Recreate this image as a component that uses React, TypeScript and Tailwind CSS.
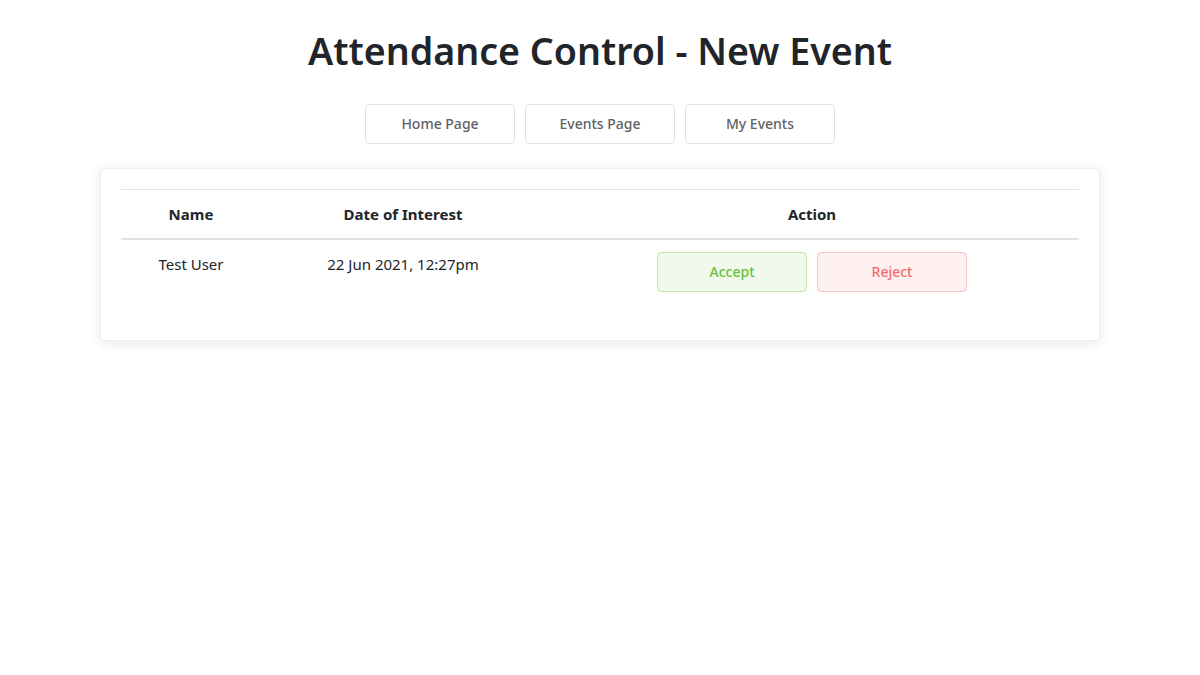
const font = { fontFamily: '"Noto Sans", "Open Sans", sans-serif' };

function NavButton({ label }: { label: string }) {
  return (
    <button className="w-[150px] h-10 rounded border border-[#dcdfe6] bg-white pb-[2px] text-[14px] font-medium text-[#606266]">
      {label}
    </button>
  );
}

export default function App() {
  const rows = [{ name: "Test User", date: "22 Jun 2021, 12:27pm" }];

  return (
    <div className="min-h-[675px] bg-white text-[#1f2328]" style={font}>
      <div className="flex flex-col items-center pt-[22px]">
        <h1 className="h-[58px] text-[37.6px] leading-[58px] font-semibold text-[#212529]">
          Attendance Control - New Event
        </h1>

        <div className="mt-6 flex gap-[10px]">
          <NavButton label="Home Page" />
          <NavButton label="Events Page" />
          <NavButton label="My Events" />
        </div>

        <div className="mt-6 w-[1000px] rounded border border-[#ebeef5] bg-white px-5 pt-5 pb-5 shadow-[0_2px_12px_0_rgba(0,0,0,0.1)]">
          <table className="w-full border-collapse border-t border-[#dee2e6] text-[#212529]">
            <thead>
              <tr className="h-[49px] border-b-2 border-[#dee2e6]">
                <th className="w-[140px] text-[15px] font-bold">Name</th>
                <th className="w-[284px] text-[15px] font-bold">Date of Interest</th>
                <th className="text-[15px] font-bold">Action</th>
              </tr>
            </thead>
            <tbody>
              {rows.map((r) => (
                <tr key={r.name} className="h-[81px]">
                  <td className="pt-[13px] align-top text-center text-[15px]">{r.name}</td>
                  <td className="pt-[13px] align-top text-center text-[15px]">{r.date}</td>
                  <td className="pt-3 align-top">
                    <div className="flex justify-center gap-[10px]">
                      <button className="w-[150px] h-10 rounded border border-[#c2e7b0] bg-[#f0f9eb] text-[14px] font-medium text-[#67c23a]">
                        Accept
                      </button>
                      <button className="w-[150px] h-10 rounded border border-[#fbc4c4] bg-[#fef0f0] text-[14px] font-medium text-[#f56c6c]">
                        Reject
                      </button>
                    </div>
                  </td>
                </tr>
              ))}
            </tbody>
          </table>
        </div>
      </div>
    </div>
  );
}
